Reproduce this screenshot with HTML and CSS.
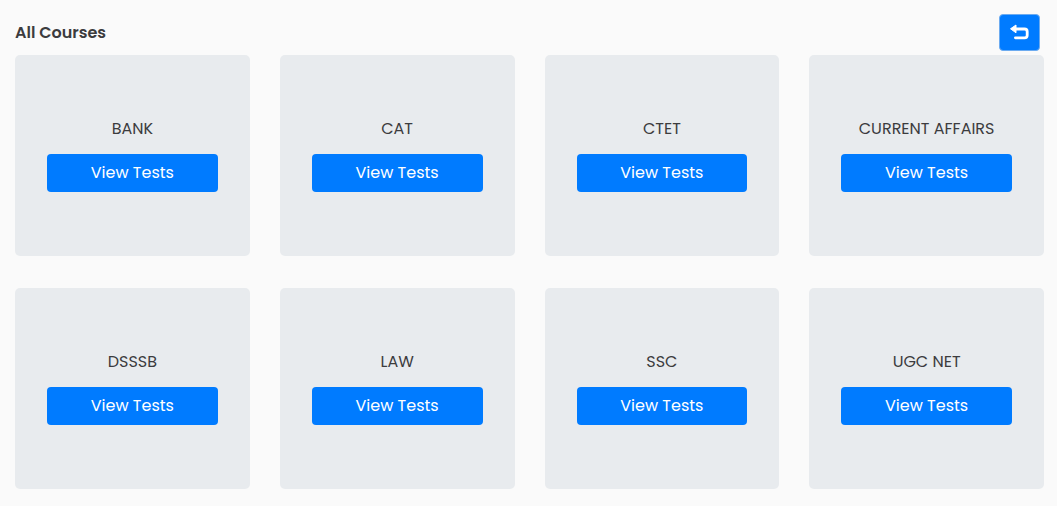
FILE: index.html
```
<!DOCTYPE html>
<html lang="en">
<head>
    <meta charset="UTF-8">
    <meta name="viewport" content="width=device-width, initial-scale=1.0">
    <title>All Courses</title>
    <link rel="stylesheet" href="styles.css">
</head>
<body>
    <header class="page-header">
        <h1>All Courses</h1>
        <button type="button" class="back-btn" aria-label="Go back">
            <svg width="21" height="19" viewBox="0 0 21 19" aria-hidden="true">
                <path d="M6 6H15.5Q18.2 6 18.2 8.8V12.2Q18.2 14.8 15.5 14.8H6.4" fill="none" stroke="#fff" stroke-width="2.8" stroke-linecap="round"/>
                <path d="M1.5 5.8L7 2V9.8Z" fill="#fff" stroke="#fff" stroke-linejoin="round"/>
            </svg>
        </button>
    </header>

    <main class="course-grid">
        <div class="course-card">
            <h2>BANK</h2>
            <button type="button" class="btn">View Tests</button>
        </div>
        <div class="course-card">
            <h2>CAT</h2>
            <button type="button" class="btn">View Tests</button>
        </div>
        <div class="course-card">
            <h2>CTET</h2>
            <button type="button" class="btn">View Tests</button>
        </div>
        <div class="course-card">
            <h2>CURRENT AFFAIRS</h2>
            <button type="button" class="btn">View Tests</button>
        </div>
        <div class="course-card">
            <h2>DSSSB</h2>
            <button type="button" class="btn">View Tests</button>
        </div>
        <div class="course-card">
            <h2>LAW</h2>
            <button type="button" class="btn">View Tests</button>
        </div>
        <div class="course-card">
            <h2>SSC</h2>
            <button type="button" class="btn">View Tests</button>
        </div>
        <div class="course-card">
            <h2>UGC NET</h2>
            <button type="button" class="btn">View Tests</button>
        </div>
    </main>
</body>
</html>
```
FILE: styles.css
```
* {
    box-sizing: border-box;
}

body {
    margin: 0;
    padding: 14px 13px 16px 15px;
    background-color: #fafafa;
    color: #3c3c3e;
    font-family: Poppins, Inter, sans-serif;
    font-size: 16px;
    line-height: 24px;
}

.page-header {
    display: flex;
    justify-content: space-between;
    align-items: center;
    padding-right: 4px;
    margin-bottom: 4px;
}

h1 {
    margin: 0;
    font-size: 16px;
    font-weight: 600;
}

.back-btn {
    display: flex;
    justify-content: center;
    align-items: center;
    width: 41px;
    height: 37px;
    padding: 0;
    background-color: #007bff;
    border: 1px solid #6cabf0;
    border-radius: 4px;
    cursor: pointer;
}

.course-grid {
    display: grid;
    grid-template-columns: repeat(4, 1fr);
    gap: 32px 30px;
}

.course-card {
    padding: 62px 32px 64px;
    background-color: #e8ebee;
    border-radius: 5px;
    text-align: center;
}

.course-card h2 {
    margin: 0 0 13px;
    font-size: 16px;
    font-weight: 400;
    white-space: nowrap;
}

.btn {
    display: block;
    width: 100%;
    padding: 7px 12px;
    background-color: #007bff;
    color: #fff;
    border: none;
    border-radius: 4px;
    font-family: inherit;
    font-size: 16px;
    line-height: 24px;
    cursor: pointer;
}

.btn:hover,
.back-btn:hover {
    background-color: #0069d9;
}
```
